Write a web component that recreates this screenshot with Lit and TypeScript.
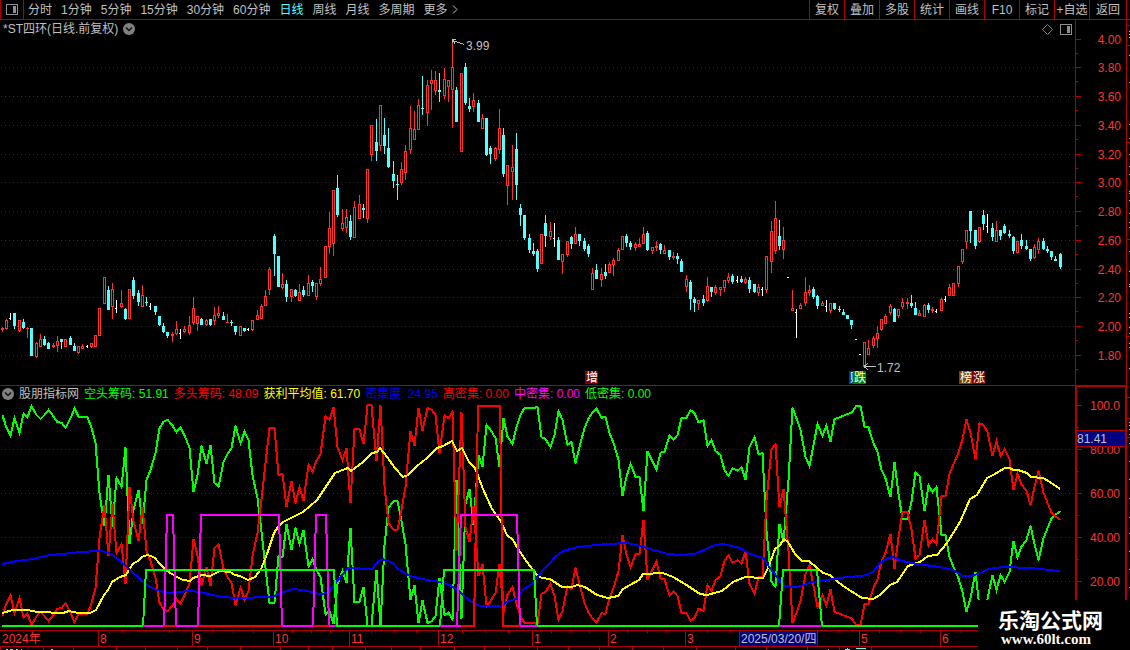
import { LitElement, html, svg, css } from "lit";
import { customElement, state } from "lit/decorators.js";

/* Sheet coordinates: the price pane starts at y = 20, the indicator pane at y = 386. */
const PRICE_TOP = 20;
const IND_TOP = 386;
const STEP = 4.248;
const slot = (i: number) => Math.floor(2.255 + i * STEP);

/* One entry per day. r / c: high, body top, body bottom, low. w: high, close, low. */
const DAYS = `r327,328,330,332 r319,320,329,330 w313,318,320 c313,313,326,329 r320,320,331,332 c319,322,328,329 r327,328,329,338 c328,328,356,356
r342,343,357,358 r334,339,347,347 c336,339,345,346 c342,343,349,349 r343,345,347,348 r336,341,346,352 c339,339,342,349 r339,339,347,347
c336,338,345,345 c343,346,351,351 r346,346,353,354 r344,346,349,349 w345,346,348 r343,343,347,348 r335,335,347,347 r308,308,336,336
r277,277,304,304 c286,290,310,310 r283,289,307,319 w300,308,313 r290,303,307,308 c308,309,319,320 r289,289,319,319 c277,280,296,299
c290,293,302,306 r285,295,307,307 c297,302,303,306 w303,306,310 c306,306,312,315 c316,316,325,326 c323,326,332,333 c332,332,336,338
r332,334,336,342 r321,329,334,335 w329,333,339 r326,329,332,333 r316,325,333,335 r297,308,323,325 r316,316,324,331 c318,319,325,325
r319,320,325,326 c319,319,325,326 r307,315,321,325 r306,313,316,318 c312,316,320,320 r314,322,323,323 c320,322,323,326 c326,326,332,335
r326,326,336,336 c328,328,331,332 w328,329,331 r320,320,330,331 r310,315,320,320 r304,306,319,319 r290,296,306,306 r267,269,290,295
c234,236,254,276 c256,256,287,287 r273,284,288,289 c280,284,297,302 r289,289,297,302 c289,290,296,297 r284,292,301,301 c286,290,295,297
r275,283,296,296 c280,282,286,292 r283,283,297,300 r267,279,284,286 r246,246,278,278 r212,228,247,254 r190,190,244,256 c175,188,215,217
r209,223,229,231 r209,217,228,233 c215,221,237,240 r201,207,238,238 r195,204,219,219 c204,208,210,218 r169,169,219,223 r125,125,155,161
c119,142,151,161 r105,105,146,151 c118,135,146,154 c128,148,167,168 c161,174,181,188 c175,184,185,200 r162,169,183,185 r145,151,173,180
r106,128,150,154 r111,129,140,140 r99,105,130,130 c76,108,109,115 r80,85,113,126 r70,80,84,110 r71,80,91,95 c73,90,92,102
r68,79,96,99 r80,80,87,102 r42,67,90,128 c87,90,122,122 r73,73,152,152 c63,67,103,105 c98,106,109,112 r93,100,107,112
c100,103,122,122 r114,118,129,129 c118,118,155,156 c146,148,154,164 r147,148,159,161 r109,128,150,154 c128,135,174,177 r165,165,186,205
r145,167,172,200 c133,149,185,200 c204,208,215,226 c215,215,238,240 c234,238,250,253 c243,251,254,256 c249,251,269,272 r234,234,264,264
c215,223,236,247 r222,231,237,240 w223,238,247 c237,240,260,260 r254,254,262,274 r241,241,255,257 c236,237,244,249 r227,234,244,244
c234,234,241,246 c238,241,249,251 c244,246,254,257 r268,273,290,290 c264,270,279,279 r268,274,280,287 c264,272,276,279 r262,264,273,273
r258,260,265,276 r248,250,261,261 r236,236,250,250 c234,236,243,247 c241,243,247,250 r242,244,248,251 r238,244,247,247 r227,234,244,244
c231,233,250,251 r247,247,251,254 r241,246,248,251 c243,244,250,254 r245,250,254,254 c250,250,257,260 r252,256,258,260 c253,256,259,264
c259,261,272,272 r275,279,287,292 c280,282,299,310 c297,299,303,312 r300,300,304,310 c295,299,303,306 r277,286,301,302 c287,287,292,297
r285,287,293,295 r287,287,290,296 r280,280,288,292 r273,277,281,283 c274,276,282,284 w276,280,283 c276,279,282,283 r277,279,283,284
c277,280,289,293 c284,284,292,293 r284,287,293,296 w287,289,296 r256,256,290,293 r221,231,262,273 r201,218,251,254 c220,236,246,250
r227,240,250,259 w277,277,278 r290,308,311,311 w309,312,338 r303,305,309,309 r277,292,303,306 r285,290,293,296 c287,289,297,299
c295,296,306,309 r301,303,306,306 w300,306,312 r303,303,311,313 c303,303,309,310 c306,309,310,312 c309,312,315,315 c315,315,319,319
c320,320,325,329 w339,339,340 w354,354,355 r342,342,367,367 r340,348,355,355 r336,338,346,348 r326,333,339,348 r319,319,330,331
r314,316,324,324 r304,306,313,315 c308,309,322,322 r309,309,316,318 r298,302,307,309 r298,302,304,309 c295,303,306,308 c302,308,315,315
r310,313,316,316 r304,305,317,317 c303,305,310,313 r307,309,311,313 w309,311,313 r298,299,311,311 w296,299,302 r284,287,296,296
r283,283,296,296 r266,266,284,287 r249,249,262,264 r230,230,242,249 c211,211,231,243 c230,230,246,249 r227,227,242,243 c210,215,224,230
w214,226,233 c223,228,237,241 r221,230,242,242 c230,230,236,240 c224,226,233,234 c230,234,236,238 c236,237,251,254 r241,241,253,253
c234,240,246,249 c240,246,249,250 c249,249,259,261 r244,247,258,259 r238,241,250,254 c238,241,249,250 c246,249,251,253 c251,251,257,260
c256,259,261,261 c253,254,267,269`.split(/\s+/);

/* Short-side chips per day, three units to a pixel, measured down from y = 385.
   The long side is its mirror: both always add up to 100 %. */
const MIRROR = 783;
const SHORT = [
  91,128,152,100,143,86,97,63,90,102,90,75,94,112,113,128,100,71,95,97,97,128,174,325,423,269,427,279,305,187,476,375,314,417,285,255,204,130,110,104,122,141,127,151,188,322,271,182,236,180,294,305,232,207,190,122,175,140,165,270,340,440,550,653,653,
  513,516,418,495,428,476,435,544,523,556,576,688,678,717,598,558,595,428,652,651,605,722,722,555,722,480,368,348,348,408,478,645,600,715,646,714,709,693,579,691,683,703,285,701,358,311,421,210,246,120,135,159,246,100,155,177,125,90,69,70,69,66,
  157,162,186,150,78,105,179,171,235,185,130,100,83,71,98,96,145,173,225,332,275,236,275,277,378,198,230,254,203,200,152,163,150,99,98,75,85,112,106,183,165,198,210,256,272,250,257,247,284,187,156,207,205,438,590,605,416,472,285,68,100,135,215,243,180,117,152,122,170,
  102,97,92,87,83,62,62,125,127,175,200,255,280,337,232,327,401,401,350,262,273,379,301,321,306,450,451,517,545,580,620,680,640,560,668,663,642,570,615,570,590,562,467,517,485,465,422,477,526,460,430,400,388,379,
];

const AVERAGE = "2,613 13,610 27,610 38,612 63,613 69,611 78,613 90,613 96,610 104,595 108,590 112,582 120,577 126,575 130,568 134,563 138,561 142,557 147,555 151,556 155,558 159,563 167,571 177,577 183,580 190,581 193,578 202,575 210,576 220,571 230,572 235,575 240,576 248,580 255,577 261,569 267,554 274,533 278,527 283,522 303,512 317,500 325,488 335,473 340,471 348,468 351,471 363,462 372,453 377,452 380,448 387,457 395,468 403,477 408,475 417,466 427,458 437,448 443,446 452,441 457,451 462,448 469,462 475,468 483,489 492,509 500,520 507,535 513,540 518,549 527,562 537,575 542,578 550,579 562,587 572,587 577,585 585,587 597,595 608,598 618,596 623,589 639,580 643,574 663,573 673,577 685,584 700,594 707,595 722,591 733,582 745,577 763,578 768,568 775,549 780,545 784,539 788,542 795,554 802,561 809,561 817,568 823,573 830,575 843,586 862,598 873,599 880,595 890,585 897,582 908,566 920,562 928,556 937,555 947,543 960,522 970,499 977,495 987,478 993,475 1005,468 1010,468 1013,470 1018,470 1027,473 1031,477 1043,478 1050,482 1060,489";
const DENSITY = "2,564 17,561 33,559 50,555 63,554 80,552 98,551 107,552 117,558 130,570 147,585 157,590 167,593 178,592 190,591 200,592 217,596 233,598 273,597 278,594 293,589 303,590 320,594 328,593 338,580 348,568 372,569 377,563 382,559 393,563 398,569 410,576 427,580 440,582 450,585 460,592 470,601 480,606 500,606 507,602 517,598 523,590 533,583 543,570 550,563 555,557 563,551 578,547 607,544 628,543 640,546 647,548 668,554 680,555 695,554 715,545 723,544 740,548 750,554 763,558 770,568 777,577 783,586 797,587 813,582 847,577 863,576 873,572 880,563 888,558 893,557 902,561 917,564 940,567 953,570 963,576 970,576 978,574 988,569 1003,567 1030,568 1060,571";
const HIGH = "2,626 474,626 478,406 500,406 503,626 1060,626";
const MIDDLE = "2,626 164,626 167,515 173,515 176,626 198,626 201,515 279,515 282,626 313,626 316,515 326,515 329,626 457,626 461,515 517,515 520,626 1060,626";
const LOW_LEFT = "2,626 143,626 146,570 334,570 337,626 440,626 444,570 534,570 537,626 779,626 783,570 817,570 822,626 1060,626";
/* Stretches of the base line on which a zero-valued series shows its colour. */
const BASE: [number, number, string][] = [
  [143, 164, "mag"], [164, 198, "red"], [176, 198, "mag"], [198, 313, "red"], [282, 313, "mag"], [313, 334, "red"], [329, 334, "mag"],
  [440, 461, "mag"], [461, 474, "red"], [503, 520, "red"], [520, 537, "mag"], [779, 822, "mag"],
];

const shift = (points: string, dy: number) =>
  points.split(" ").map((p) => { const [x, y] = p.split(",").map(Number); return `${x},${y - dy}`; }).join(" ");

function candlePaths() {
  const out: Record<string, string> = { r: "", c: "", w: "" };
  DAYS.forEach((d, i) => {
    const k = d[0];
    const v = d.slice(1).split(",").map((n) => Number(n) - PRICE_TOP);
    const x = slot(i);
    const box = (l: number, t: number, w: number, b: number) => (b > t ? `M${l} ${t}h${w}V${b}h${-w}z` : "");
    if (k === "w") {
      const [h, c, l] = v;
      out.w += l - h <= 1 ? box(x - 1, h, 2, l) : box(x, h, 1, l) + box(x - 1, c, 1, c + 1);
      return;
    }
    const [h, t, b, l] = v;
    out[k] += box(x, h, 1, t) + box(x - 1, t, 3, b) + box(x, b, 1, l);
    if (k === "r" && b - t > 2) out.r += box(x, t + 1, 1, b - 1);
  });
  return out;
}

const CANDLES = candlePaths();
const series = (f: (v: number) => number) => SHORT.map((v, i) => `${slot(i) + 0.5},${(f(v) / 3 - 1).toFixed(1)}`).join(" ");
const GREEN = series((v) => v);
const RED = series((v) => MIRROR - v);

const priceY = (k: number) => Math.floor(355.5 - 28.77 * k) - PRICE_TOP;
const PRICES = Array.from({ length: 12 }, (_, k) => ({ y: priceY(k), label: (1.8 + k * 0.2).toFixed(2) }));
const LEVELS = [20, 40, 60, 80, 100].map((p, k) => ({ y: 581 - 44 * k - IND_TOP, label: p === 100 ? "100.0" : p.toFixed(2) }));

const PERIODS = ["分时", "1分钟", "5分钟", "15分钟", "30分钟", "60分钟", "日线", "周线", "月线", "多周期"];
const COMMANDS = ["复权", "叠加", "多股", "统计", "画线", "F10", "标记", "+自选", "返回"];
const READOUTS: [string, string, string][] = [
  ["空头筹码", "51.91", "green"], ["多头筹码", "48.09", "red"], ["获利平均值", "61.70", "yellow"], ["密集度", "24.95", "blue"],
  ["高密集", "0.00", "red"], ["中密集", "0.00", "mag"], ["低密集", "0.00", "green"],
];
const MONTHS: [number, string][] = [[98, "8"], [192, "9"], [273, "10"], [349, "11"], [438, "12"], [532, "1"], [608, "2"], [685, "3"], [859, "5"], [940, "6"]];
const WEEKS = [122, 145, 169, 212, 233, 253, 292, 311, 330, 371, 394, 416, 462, 485, 508, 551, 570, 589, 627, 647, 666, 707, 730, 838, 879, 900, 920, 961];
const NEXT_TICKS = [0, 43, 73, 116, 145, 177, 207, 240, 280, 308, 332, 365, 391, 420, 454, 484, 509, 537, 568, 599, 632, 663, 696, 735, 766, 807, 839, 871];
const EDGE_LINES = [25, 45, 142, 239, 336, 397, 418, 437];
const EDGE_DOTS = [31, 34, 37, 55, 82, 124, 138, 154, 166, 174, 191, 193, 200, 213, 222, 227, 251, 271, 284, 286, 313, 317, 327, 333, 343, 347, 368, 422, 425, 429, 434, 443, 461, 479, 498, 517, 533, 551, 569, 587];

@customElement("app-root")
export class AppRoot extends LitElement {
  static styles = css`
    :host {
      display: grid;
      grid-template-rows: 20px minmax(0, 1fr) 17px 3px;
      position: relative;
      height: 100vh;
      overflow: hidden;
      background: #000;
      color: #c0c0c0;
      font: 12px/16px "Liberation Sans", "Noto Sans CJK SC", sans-serif;
    }
    svg { display: block; }
    button { background: none; border: 0; padding: 0; margin: 0; color: inherit; font: inherit; white-space: nowrap; cursor: pointer; }
    .bar { display: flex; justify-content: space-between; border-bottom: 1px solid #b00000; }
    .panel { display: flex; align-items: center; justify-content: center; width: 24px; border-left: 1px solid #b00000; border-right: 1px solid #b00000; box-sizing: border-box; }
    .periods { display: flex; align-items: center; gap: 9px; }
    .periods .panel { height: 19px; margin-right: -5px; }
    .periods .on { color: #54ffff; }
    .more { display: flex; align-items: center; gap: 4px; }
    .commands { display: flex; border-right: 1px solid #b00000; margin-right: 3px; }
    .commands button { width: 35px; border-left: 1px solid #b00000; }
    .commands button:last-child { width: 37px; }
    .body { display: grid; grid-template-columns: minmax(0, 1fr) 52px 3px; grid-template-rows: 366fr 244fr; min-height: 0; }
    .pane { display: grid; grid-template: minmax(0, 1fr) / minmax(0, 1fr); overflow: hidden; }
    .pane > * { grid-area: 1 / 1; }
    .price { border-bottom: 1px solid #b00000; }
    .plot { width: 100%; height: 100%; }
    .crisp { shape-rendering: crispEdges; }
    .title { display: flex; align-items: center; align-self: start; gap: 5px; height: 18px; padding: 0 3px; }
    .title .tools { display: flex; align-items: center; gap: 7px; margin-left: auto; }
    .readouts { display: flex; align-items: center; align-self: start; gap: 5px; height: 16px; padding-left: 2px; white-space: nowrap; }
    .scale { border-left: 1px solid #b00000; border-right: 1px solid #b00000; border-bottom: 1px solid #b00000; overflow: hidden; }
    .scale.low { border: 2px solid #b00000; border-top-width: 1px; border-bottom: 0; }
    .edge { grid-column: 3; grid-row: 1 / 3; }
    .time { border-top: 1px solid #b00000; border-bottom: 1px solid #b00000; }
    .axis { fill: #ff3232; }
    .grid { stroke: #a00000; stroke-dasharray: 1 3; }
    .tick { stroke: #b00000; }
    .line { fill: none; stroke-width: 2; }
    .up { fill: #ff3232; fill-rule: evenodd; }
    .down { fill: #54ffff; }
    .flat { fill: #fff; }
    .grey { fill: #c0c0c0; }
    .greyline { stroke: #c0c0c0; fill: none; }
    .white { fill: #fff; }
    .navy { fill: #000080; }
    .green { color: #00ff00; stroke: none; }
    .red { color: #ff0000; stroke: none; }
    .yellow { color: #ffff00; stroke: none; }
    .blue { color: #0000ff; stroke: none; }
    .mag { color: #ff00ff; stroke: none; }
    .line, .base { stroke: currentColor; }
    .base { stroke-width: 2; }
    .brand { position: absolute; right: 0; bottom: 0; width: 152px; height: 50px; box-sizing: border-box; padding: 7px 0 0 20px; background: #000; color: #fff; }
    .brand b { display: block; font: bold 21px/24px "Noto Sans CJK SC", sans-serif; }
    .brand a { display: block; padding-left: 3px; color: #fff8ee; font: bold 15px/16px "Liberation Serif", serif; text-decoration: none; }
  `;

  @state() private period = "日线";

  private panelIcon() {
    return svg`<svg class="crisp" width="12" height="11" viewBox="0 0 12 11" aria-hidden="true">
      <rect x="0.5" y="0.5" width="11" height="10" rx="1" fill="none" stroke="#909090"></rect>
      <rect x="7" y="2" width="3" height="7" fill="#909090"></rect></svg>`;
  }

  private chevron() {
    return svg`<svg width="12" height="12" viewBox="0 0 12 12" aria-hidden="true">
      <circle cx="6" cy="6" r="6" fill="#808080"></circle>
      <path d="M3 4.5L6 7.5L9 4.5" fill="none" stroke="#101010" stroke-width="1.5"></path></svg>`;
  }

  private tag(x: number, w: number, label: string, fill: string) {
    return svg`<rect x=${x} y="351" width=${w} height="13" fill=${fill}></rect>
      <text class="white" x=${x + w - 12} y="362">${label}</text>`;
  }

  private pricePlot() {
    return html`<svg class="plot" role="img" aria-label="日线 K线">
      <g class="crisp">
        ${PRICES.slice(0, 11).map((p) => svg`<line class="grid" x1="1" x2="100%" y1=${p.y + 0.5} y2=${p.y + 0.5}></line>`)}
        <path class="up" d=${CANDLES.r}></path>
        <path class="down" d=${CANDLES.c}></path>
        <path class="flat" d=${CANDLES.w}></path>
        <path class="greyline" d="M452.5 23V19.5H456M453 20.5L464 24.5M453 20.5L455.5 24.5"></path>
        <path class="greyline" d="M864 346.5H876M864 346.5L868 343.5M864 346.5L868 349.5"></path>
      </g>
      <text class="grey" x="466" y="30">3.99</text>
      <text class="grey" x="877" y="352">1.72</text>
      ${this.tag(585, 13, "增", "#800000")}
      ${this.tag(849, 13, "财", "#003c78")}
      ${this.tag(853, 13, "跌", "#008000")}
      ${this.tag(959, 13, "榜", "#804000")}
      ${this.tag(972, 13, "涨", "#800000")}
    </svg>`;
  }

  private indicatorPlot() {
    const local = (s: string) => shift(s, IND_TOP);
    return html`<svg class="plot crisp" role="img" aria-label="股朋指标网">
      ${LEVELS.slice(0, 4).map((l) => svg`<line class="grid" x1="1" x2="100%" y1=${l.y + 0.5} y2=${l.y + 0.5}></line>`)}
      <polyline class="green line" points=${GREEN}></polyline>
      <polyline class="red line" points=${RED}></polyline>
      <polyline class="yellow line" points=${local(AVERAGE)}></polyline>
      <polyline class="blue line" points=${local(DENSITY)}></polyline>
      <polyline class="red line" points=${local(HIGH)}></polyline>
      <polyline class="mag line" points=${local(MIDDLE)}></polyline>
      <polyline class="green line" points=${local(LOW_LEFT)}></polyline>
      ${BASE.map(([a, b, c]) => svg`<line class="base ${c}" x1=${a} x2=${b} y1="240" y2="240"></line>`)}
    </svg>`;
  }

  private scaleTicks(list: { y: number; label: string }[], minor: number, right: number) {
    return list.map((p) => svg`
      <path class="tick crisp" d="M0 ${p.y + 0.5}h5M0 ${p.y - minor + 0.5}h2"></path>
      <text class="axis" x=${right} y=${p.y + 5} text-anchor="end">${p.label}</text>`);
  }

  render() {
    return html`
      <header class="bar">
        <nav class="periods">
          <button class="panel" aria-label="侧栏">${this.panelIcon()}</button>
          ${PERIODS.map((p) => html`<button class=${p === this.period ? "on" : ""} @click=${() => (this.period = p)}>${p}</button>`)}
          <button class="more">更多<svg width="6" height="9" viewBox="0 0 6 9"><path d="M1 0.5L5 4.5L1 8.5" fill="none" stroke="#c0c0c0"></path></svg></button>
        </nav>
        <nav class="commands">${COMMANDS.map((c) => html`<button>${c}</button>`)}</nav>
      </header>
      <main class="body">
        <section class="pane price">
          ${this.pricePlot()}
          <div class="title">
            <span>*ST四环(日线.前复权)</span>${this.chevron()}
            <span class="tools">
              <svg width="11" height="11" viewBox="0 0 11 11"><path d="M5.5 0.5L10.5 5.5L5.5 10.5L0.5 5.5z" fill="none" stroke="#808080"></path></svg>
              ${this.panelIcon()}
            </span>
          </div>
        </section>
        <div class="scale">
          <svg class="plot">${this.scaleTicks(PRICES, -14, 45)}</svg>
        </div>
        <section class="pane">
          ${this.indicatorPlot()}
          <div class="readouts">
            ${this.chevron()}<span>股朋指标网</span>
            ${READOUTS.map(([n, v, c]) => html`<span class=${c}>${n}: ${v}</span>`)}
          </div>
        </section>
        <div class="scale low">
          <svg class="plot">
            ${this.scaleTicks(LEVELS.map((l) => ({ ...l, y: l.y - 1 })), 22, 43)}
            <rect class="navy" x="0" y="43" width="100%" height="17"></rect>
            <path class="tick crisp" d="M0 43.5H48M0 59.5H48"></path>
            <text class="grey" x="0" y="56">81.41</text>
          </svg>
        </div>
        <svg class="edge crisp" width="3" height="100%">
          ${EDGE_LINES.map((y) => svg`<path class="tick" d="M0 ${y - PRICE_TOP + 0.5}h3"></path>`)}
          ${EDGE_DOTS.map((y) => svg`<rect class="grey" x="2" y=${y - PRICE_TOP} width="1" height="1"></rect>`)}
        </svg>
      </main>
      <div class="time">
        <svg class="plot">
          <path class="tick crisp" d=${MONTHS.map(([x]) => `M${x + 0.5} 0v15`).join("") + WEEKS.map((x) => `M${x + 0.5} 0v2`).join("")}></path>
          <text class="axis" x="2" y="12">2024年</text>
          ${MONTHS.map(([x, m]) => svg`<text class="axis" x=${x + 2} y="12">${m}</text>`)}
          <rect class="navy crisp" x="739" y="0" width="79" height="15"></rect>
          <path class="tick crisp" d="M739.5 0v15M817.5 0v15"></path>
          <text class="grey" x="741" y="12">2025/03/20/四</text>
        </svg>
      </div>
      <svg class="plot crisp">
        <path class="tick" d=${NEXT_TICKS.map((x) => `M${x + 0.5} 0v3`).join("")}></path>
        <path class="greyline" d="M6 2.5h2M10 2.5h3M16 2.5h2M21 2.5h1M51 2.5h2M828 2.5h1"></path>
        <path class="down" d="M845 2h5v1h-5zM847 1h1v2h-1zM856 1h10v1h-10z"></path>
      </svg>
      <footer class="brand"><b>乐淘公式网</b><a href="#">www.60lt.com</a></footer>
    `;
  }
}
